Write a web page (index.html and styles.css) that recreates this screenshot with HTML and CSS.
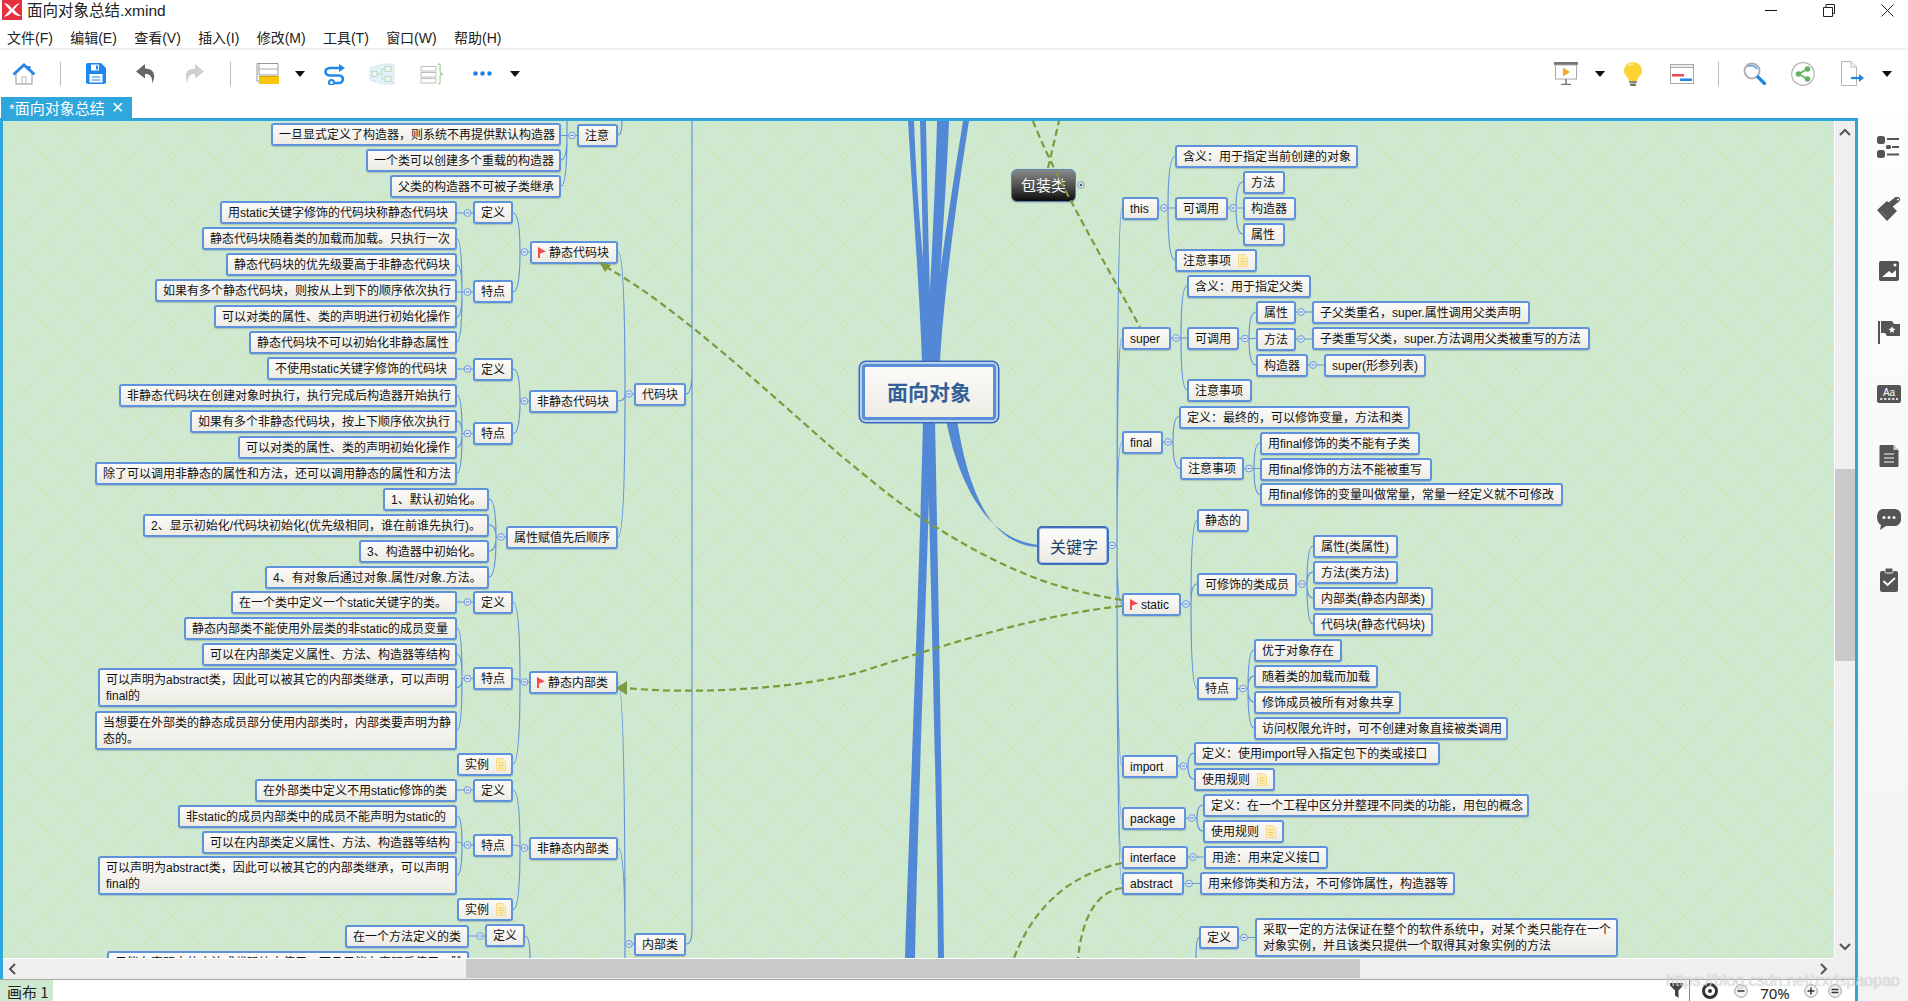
FILE: index.html
```html
<!DOCTYPE html>
<html lang="zh-CN">
<head>
<meta charset="utf-8">
<title>面向对象总结.xmind</title>
<link rel="stylesheet" href="styles.css">
</head>
<body>
<svg class="defs" aria-hidden="true">
  <symbol id="note" viewBox="0 0 10 13"><path d="M.5.5H6.5L9.5 3.5V12.5H.5Z" fill="#fdeeb8" stroke="#f6d98a"/><path d="M2.5 5H7.5M2.5 7.5H7.5M2.5 10H7.5" stroke="#f4c95c"/></symbol>
  <symbol id="flag" viewBox="0 0 8 11"><path d="M0 0L8 4.5 2 6.5V11H0Z" fill="#ee4a50"/></symbol>
  <symbol id="tri" viewBox="0 0 10 6"><path d="M0 0H10L5 6Z" fill="#111"/></symbol>
</svg>

<header class="titlebar">
  <svg class="app-logo" viewBox="0 0 20 20"><rect width="20" height="20" fill="#e5303f"/><path d="M2 3C7 4 9 7 10 9 12 6 14 4 18 3 15 6 13 8 12 10 14 12 16 14 19 16 14 16 12 14 10 12 8 14 6 16 2 17 4 14 6 12 8 10 6 8 4 6 2 3Z" fill="#fff"/></svg>
  <span class="doc-title">面向对象总结.xmind</span>
  <div class="win-controls">
    <span class="win-btn"><svg width="12" height="12" viewBox="0 0 12 12"><path d="M0 6.5H12" stroke="#111"/></svg></span>
    <span class="win-btn"><svg width="12" height="13" viewBox="0 0 12 13"><path d="M.5 3.5H9.5V12.5H.5ZM3 3.5V.5H11.5V9.5H9.5" fill="none" stroke="#222"/></svg></span>
    <span class="win-btn win-close"><svg width="13" height="13" viewBox="0 0 13 13"><path d="M.5.5L12.5 12.5M12.5.5L.5 12.5" stroke="#222"/></svg></span>
  </div>
</header>

<nav class="menubar">
  <span>文件(F)</span><span>编辑(E)</span><span>查看(V)</span><span>插入(I)</span><span>修改(M)</span><span>工具(T)</span><span>窗口(W)</span><span>帮助(H)</span>
</nav>

<div class="toolbar">
  <span class="tb w40"><svg width="24" height="22" viewBox="0 0 24 22"><path d="M4 11V21H20V11" fill="#fff" stroke="#b5b5b5" stroke-width="1.4"/><path d="M10 21V14H14V21" fill="none" stroke="#b5b5b5"/><path d="M1.5 11.5L12 2 22.5 11.5" fill="none" stroke="#2b86e6" stroke-width="3"/><path d="M17 3V7" stroke="#2b86e6" stroke-width="3"/></svg></span>
  <span class="tb w32"><i class="sep"></i></span>
  <span class="tb w40"><svg width="20" height="21" viewBox="0 0 20 21"><path d="M2 0H15L20 5V19a2 2 0 0 1-2 2H2a2 2 0 0 1-2-2V2A2 2 0 0 1 2 0Z" fill="#1e88f0"/><rect x="5" y="1.5" width="8" height="6" fill="#fff"/><rect x="10" y="2.5" width="2" height="4" fill="#1e88f0"/><rect x="3.5" y="11" width="13" height="8.5" fill="#fff"/><path d="M5.5 14H14.5M5.5 17H14.5" stroke="#1e88f0"/></svg></span>
  <span class="tb w58"><svg width="19" height="21" viewBox="0 0 19 21"><path d="M9 1L0 8.5 9 15.5V11C13 10.500 17 13 16 20.500 20 14 19 5.500 9 5.500Z" fill="#666"/></svg></span>
  <span class="tb w40"><svg width="19" height="21" viewBox="0 0 19 21"><path d="M10 1L19 8.500 10 15.500V11C6 10.500 2 13 3 20.500-1 14 0 5.500 10 5.500Z" fill="#cfcfcf"/></svg></span>
  <span class="tb w32"><i class="sep"></i></span>
  <span class="tb w42"><svg width="23" height="21" viewBox="0 0 23 21"><path d="M3 .5H22V12H3ZM3 .5H1V18H3" fill="#fff" stroke="#999"/><path d="M3 6H22" stroke="#aaa"/><rect x="3" y="13" width="20" height="8" fill="#fbc50d"/><rect x="3" y="13" width="20" height="1" fill="#d9a400"/></svg></span>
  <span class="tb w24"><svg class="tri" viewBox="0 0 10 6"><use href="#tri"/></svg></span>
  <span class="tb w44"><svg width="24" height="22" viewBox="0 0 24 22"><path d="M21 5H8C2 5 2 12.500 8 12.500H17C22.500 12.500 22 20 16.500 20H13" fill="none" stroke="#1e88e5" stroke-width="2.6"/><circle cx="9.500" cy="19.500" r="2.500" fill="none" stroke="#1e88e5" stroke-width="2"/><path d="M17 1V9L23 5Z" fill="#1e88e5"/></svg></span>
  <span class="tb w52"><svg width="26" height="22" viewBox="0 0 26 22"><path d="M1 5L13 1 25 1V21H13L1 17Z" fill="#e3f2f8" stroke="#bfe0ec" stroke-dasharray="2 1.500"/><path d="M8 11H13M13 6V16M13 6H16M13 16H16" stroke="#bcd9c2" fill="none"/><rect x="3" y="8.500" width="5" height="5" fill="#eff8f2" stroke="#bcd9c2"/><rect x="16" y="3.500" width="6" height="5" fill="#eff8f2" stroke="#bcd9c2"/><rect x="16" y="13.500" width="6" height="5" fill="#eff8f2" stroke="#bcd9c2"/></svg></span>
  <span class="tb w48"><svg width="24" height="22" viewBox="0 0 24 22"><path d="M1 3.500H16V8H1ZM1 9.500H16V14H1ZM1 15.500H16V20H1Z" fill="#fff" stroke="#bdbdbd"/><path d="M18 1C21 1 20 3 20 8 20 10 21 11 23 11 21 11 20 12 20 14 20 19 21 21 18 21" fill="none" stroke="#a7d49b" stroke-width="1.300"/></svg></span>
  <span class="tb w52"><svg width="19" height="5" viewBox="0 0 19 5"><g fill="#1f7fe0"><circle cx="2.500" cy="2.500" r="2.200"/><circle cx="9.500" cy="2.500" r="2.200"/><circle cx="16.500" cy="2.500" r="2.200"/></g></svg></span>
  <span class="tb w14"><svg class="tri" viewBox="0 0 10 6"><use href="#tri"/></svg></span>

  <span class="tb w52 tb-push"><svg width="24" height="23" viewBox="0 0 24 23"><rect x="0" y="0" width="24" height="3" fill="#777"/><rect x="1.500" y="3" width="21" height="14" fill="#fff" stroke="#aaa"/><path d="M9 5.500L16 10 9 14.500Z" fill="#f5a623"/><path d="M12 17V22M7 22.500H17" stroke="#777" stroke-width="1.500"/></svg></span>
  <span class="tb w16"><svg class="tri" viewBox="0 0 10 6"><use href="#tri"/></svg></span>
  <span class="tb w50"><svg width="18" height="24" viewBox="0 0 18 24"><path d="M9 0C14 0 18 4 18 9 18 13 14 15 13 19H5C4 15 0 13 0 9 0 4 4 0 9 0Z" fill="#fdd335"/><path d="M4 4C5.500 2.500 7 2 9 2" stroke="#fff3b0" stroke-width="1.500" fill="none"/><rect x="5" y="19" width="8" height="2" fill="#8c8c7a"/><rect x="6" y="21.500" width="6" height="2.500" rx="1" fill="#6e6e62"/></svg></span>
  <span class="tb w48"><svg width="24" height="20" viewBox="0 0 24 20"><rect x=".5" y=".5" width="23" height="19" fill="#fff" stroke="#aaa"/><rect x=".5" y=".5" width="23" height="3" fill="#eee" stroke="#aaa"/><rect x="2" y="10" width="12" height="2.500" fill="#ee4a50"/><rect x="10" y="14.500" width="12" height="2.500" fill="#1e88e5"/></svg></span>
  <span class="tb w25"><i class="sep"></i></span>
  <span class="tb w46"><svg width="23" height="23" viewBox="0 0 23 23"><circle cx="9" cy="9" r="7.500" fill="#fff" stroke="#aab0b5" stroke-width="2"/><path d="M5 4.500C8 3 11 3 14 7" fill="none" stroke="#4a90d9" stroke-width="1.300"/><path d="M15 15L21.500 21.500" stroke="#1e88e5" stroke-width="3.200" stroke-linecap="round"/></svg></span>
  <span class="tb w52"><svg width="24" height="24" viewBox="0 0 24 24"><circle cx="12" cy="12" r="11.300" fill="#fff" stroke="#b5b5b5" stroke-width="1.200"/><path d="M16.500 7L7.500 12 16.500 17" fill="none" stroke="#62b55a" stroke-width="1.600"/><g fill="#62b55a"><circle cx="16.500" cy="7" r="2.800"/><circle cx="7.500" cy="12" r="2.800"/><circle cx="16.500" cy="17" r="2.800"/></g></svg></span>
  <span class="tb w46"><svg width="23" height="25" viewBox="0 0 23 25"><path d="M.5.500H10L15.500 6V24.500H.5ZM10 .5V6H15.500" fill="#fff" stroke="#b5b5b5"/><path d="M10 17H20" stroke="#1e88e5" stroke-width="2.200"/><path d="M18 13L23 17 18 21Z" fill="#1e88e5"/></svg></span>
  <span class="tb w24 tb-last"><svg class="tri" viewBox="0 0 10 6"><use href="#tri"/></svg></span>
</div>

<div class="tabs"><span class="tab">*面向对象总结<b class="tab-x">×</b></span></div>

<main class="workspace">
  <div class="center">
    <section class="editor">
      <div class="canvas">
        <div class="stage">
          <svg class="layer" viewBox="0 0 1908 1001" aria-hidden="true">
            <defs>
              <pattern id="lattice" patternUnits="userSpaceOnUse" x="1642" y="117" width="42" height="42">
                <path d="M0 0L42 42M42 0L0 42" stroke="#d9dd8c" stroke-width="1.100" stroke-dasharray="1.400 2.800" fill="none"/>
              </pattern>
              <g id="c"><circle r="3.400" fill="#dbe8f6" stroke="#6c9bdc" stroke-width="1"/><path d="M-1.600 0H1.600" stroke="#5a7fb5"/></g>
            </defs>
            <rect width="1908" height="1001" fill="url(#lattice)"/>
            <g class="trunk">
              <path d="M908 121H914C918 230 928 300 932 362H922C920 300 914 220 908 121Z"/>
              <path d="M920 121H926C928 230 930 300 932 362H924C924 280 922 200 920 121Z"/>
              <path d="M937 121H949C946 200 938 290 936 362H926C930 290 935 200 937 121Z"/>
              <path d="M963 121H969C958 190 944 290 940 362H930C936 290 952 190 963 121Z"/>
              <path d="M923 420H931C928 560 918 800 915 958H905C910 800 920 560 923 420Z"/>
              <path d="M927 420H935C938 560 942 800 944 958H938C937 800 930 560 927 420Z"/>
              <path d="M946 420H957C968 490 990 545 1038 547V545C990 540 960 490 946 420Z"/>
            </g>
            <path class="thin" d="M577 135.500H561M567 135V121M567 135Q567 160 561 160M567 135Q567 186 561 186M622 121Q622 135 618 135
              M530 252H520M520 252Q520 213 513 213M520 252Q520 292 513 292M473 213H457
              M473 292H457M462 292Q462 239 457 239M462 292Q462 265 457 265M462 292Q462 317 457 317M462 292Q462 342 457 342
              M529 401H520M520 401Q520 369 513 369M520 401Q520 433.500 513 433.500M473 369H457
              M473 433.500H462M462 433.500Q462 395 457 395M462 433.500Q462 421 457 421M462 433.500Q462 447 457 447M462 433.500Q462 473 457 473
              M506 537H496M496 537Q496 499 489 499M496 537Q496 525 489 525M496 537Q496 551 489 551M496 537Q496 577 489 577
              M634 394H625M625 394Q625 252 618 252M625 394Q625 401 618 401M625 394Q625 537 618 537
              M692 121V930Q692 944 686 944M692 370Q692 394 686 394
              M529 682H520M520 682Q520 602 513 602M520 682Q520 678.500 513 678.500M520 682Q520 764 513 764M473 602H457
              M473 678.500H462M462 678.500Q462 628 457 628M462 678.500Q462 654 457 654M462 678.500Q462 687.500 457 687.500M462 678.500Q462 730 457 730
              M529 848H520M520 848Q520 790 513 790M520 848Q520 845 513 845M520 848Q520 909.500 513 909.500M473 790H457
              M473 845H462M462 845Q462 816 457 816M462 845Q462 842 457 842M462 845Q462 875 457 875
              M634 944H625M625 944Q625 682 618 682M625 944Q625 848 618 848M625 944V958M485 936H469M525 936Q530 936 530 958
              M1159 208H1175M1168 208Q1168 156.500 1175 156.500M1168 208Q1168 260 1175 260
              M1228 208H1243M1236 208Q1236 182 1243 182M1236 208Q1236 234 1243 234
              M1171 338H1187M1181 338Q1181 286 1187 286M1181 338Q1181 390 1187 390
              M1239 338.500H1256M1249 338Q1249 312 1256 312M1249 338Q1249 365 1256 365
              M1296 312H1312M1296 339H1312M1308 365H1324
              M1163 442H1173M1173 442Q1173 416.500 1179 416.500M1173 442Q1173 468.500 1180 468.500
              M1243 468.500H1260M1254 468.500Q1254 443 1260 443M1254 468.500Q1254 494.500 1260 494.500
              M1109 545.500H1117M1117 545.500Q1117 208 1122 208M1117 545.500Q1117 338 1122 338M1117 545.500Q1117 442 1122 442M1117 545.500Q1117 604 1122 604M1117 545.500Q1117 766 1122 766M1117 545.500Q1117 818 1122 818M1117 545.500Q1117 857 1122 857M1117 545.500Q1117 883.500 1122 883.500
              M1181 604H1191M1191 604Q1191 520.500 1197 520.500M1191 604Q1191 584 1197 584M1191 604Q1191 688.500 1197 688.500
              M1297 584H1307M1307 584Q1307 546 1313 546M1307 584Q1307 572 1313 572M1307 584Q1307 598 1313 598M1307 584Q1307 624 1313 624
              M1238 688.500H1248M1248 688.500Q1248 650 1254 650M1248 688.500Q1248 676 1254 676M1248 688.500Q1248 702 1254 702M1248 688.500Q1248 728 1254 728
              M1178 766H1188M1188 766Q1188 753 1194 753M1188 766Q1188 779 1194 779
              M1186 818H1197M1197 818Q1197 805 1203 805M1197 818Q1197 831 1203 831
              M1188 857H1204M1184 883.500H1200M1239 937.500H1255M1199 937.500Q1196 937.500 1196 958"/>
            <use href="#c" x="572" y="135.500"/><use href="#c" x="524.500" y="252"/><use href="#c" x="467.500" y="213"/><use href="#c" x="467.500" y="292"/>
            <use href="#c" x="524.500" y="401"/><use href="#c" x="467.500" y="369"/><use href="#c" x="467.500" y="433.500"/><use href="#c" x="501" y="537"/>
            <use href="#c" x="629" y="394"/><use href="#c" x="524.500" y="682"/><use href="#c" x="467.500" y="602"/><use href="#c" x="467.500" y="678.500"/>
            <use href="#c" x="524.500" y="848"/><use href="#c" x="467.500" y="790"/><use href="#c" x="467.500" y="845"/><use href="#c" x="629" y="944"/><use href="#c" x="480" y="936"/>
            <use href="#c" x="1164" y="208"/><use href="#c" x="1233" y="208"/><use href="#c" x="1176" y="338"/><use href="#c" x="1245" y="338.500"/>
            <use href="#c" x="1301" y="312"/><use href="#c" x="1301" y="339"/><use href="#c" x="1313" y="365"/><use href="#c" x="1168" y="442"/><use href="#c" x="1249" y="468.500"/>
            <use href="#c" x="1112" y="545.500"/><use href="#c" x="1186" y="604"/><use href="#c" x="1302" y="584"/><use href="#c" x="1243" y="688.500"/>
            <use href="#c" x="1183.500" y="766"/><use href="#c" x="1192" y="818"/><use href="#c" x="1193" y="857"/><use href="#c" x="1189" y="883.500"/><use href="#c" x="1244" y="937.500"/>
          </svg>

          <div class="n root" style="left:862px;top:364px;width:134px">面向对象</div>
          <div class="n key" style="left:1037px;top:526px;width:72px">关键字</div>
          <div class="n dark" style="left:1011px;top:169px;width:65px">包装类</div>
          <svg class="dark-dot" viewBox="0 0 8 8"><circle cx="4" cy="4" r="3.300" fill="#dfe6ee" stroke="#8a9bb0"/><circle cx="4" cy="4" r="1.300" fill="#4c5a6e"/></svg>

          <div class="n" style="left:271px;top:123px;width:290px">一旦显式定义了构造器，则系统不再提供默认构造器</div>
          <div class="n" style="left:366px;top:149px;width:195px">一个类可以创建多个重载的构造器</div>
          <div class="n" style="left:390px;top:175px;width:171px">父类的构造器不可被子类继承</div>
          <div class="n" style="left:577px;top:124px;width:41px">注意</div>
          <div class="n" style="left:473px;top:201px;width:40px">定义</div>
          <div class="n" style="left:220px;top:201px;width:237px">用static关键字修饰的代码块称静态代码块</div>
          <div class="n" style="left:202px;top:227px;width:255px">静态代码块随着类的加载而加载。只执行一次</div>
          <div class="n" style="left:226px;top:253px;width:231px">静态代码块的优先级要高于非静态代码块</div>
          <div class="n" style="left:530px;top:241px;width:88px"><svg class="flag"><use href="#flag"/></svg>静态代码块</div>
          <div class="n" style="left:155px;top:279px;width:302px">如果有多个静态代码块，则按从上到下的顺序依次执行</div>
          <div class="n" style="left:473px;top:280px;width:40px">特点</div>
          <div class="n" style="left:214px;top:305px;width:243px">可以对类的属性、类的声明进行初始化操作</div>
          <div class="n" style="left:249px;top:331px;width:208px">静态代码块不可以初始化非静态属性</div>
          <div class="n" style="left:267px;top:357px;width:190px">不使用static关键字修饰的代码块</div>
          <div class="n" style="left:473px;top:358px;width:40px">定义</div>
          <div class="n" style="left:529px;top:390px;width:89px">非静态代码块</div>
          <div class="n" style="left:634px;top:383px;width:52px">代码块</div>
          <div class="n" style="left:119px;top:384px;width:338px">非静态代码块在创建对象时执行，执行完成后构造器开始执行</div>
          <div class="n" style="left:190px;top:410px;width:267px">如果有多个非静态代码块，按上下顺序依次执行</div>
          <div class="n" style="left:473px;top:422px;width:40px">特点</div>
          <div class="n" style="left:238px;top:436px;width:219px">可以对类的属性、类的声明初始化操作</div>
          <div class="n" style="left:95px;top:462px;width:362px">除了可以调用非静态的属性和方法，还可以调用静态的属性和方法</div>
          <div class="n" style="left:383px;top:488px;width:106px">1、默认初始化。</div>
          <div class="n" style="left:143px;top:514px;width:346px">2、显示初始化/代码块初始化(优先级相同，谁在前谁先执行)。</div>
          <div class="n" style="left:506px;top:526px;width:112px">属性赋值先后顺序</div>
          <div class="n" style="left:359px;top:540px;width:130px">3、构造器中初始化。</div>
          <div class="n" style="left:265px;top:566px;width:224px">4、有对象后通过对象.属性/对象.方法。</div>
          <div class="n" style="left:231px;top:591px;width:226px">在一个类中定义一个static关键字的类。</div>
          <div class="n" style="left:473px;top:591px;width:40px">定义</div>
          <div class="n" style="left:184px;top:617px;width:273px">静态内部类不能使用外层类的非static的成员变量</div>
          <div class="n" style="left:202px;top:643px;width:255px">可以在内部类定义属性、方法、构造器等结构</div>
          <div class="n two" style="left:98px;top:668px;width:359px">可以声明为abstract类，因此可以被其它的内部类继承，可以声明<br>final的</div>
          <div class="n" style="left:473px;top:667px;width:40px">特点</div>
          <div class="n" style="left:529px;top:671px;width:89px"><svg class="flag"><use href="#flag"/></svg>静态内部类</div>
          <div class="n two" style="left:95px;top:711px;width:362px">当想要在外部类的静态成员部分使用内部类时，内部类要声明为静<br>态的。</div>
          <div class="n" style="left:457px;top:753px;width:56px">实例<svg class="note"><use href="#note"/></svg></div>
          <div class="n" style="left:255px;top:779px;width:202px">在外部类中定义不用static修饰的类</div>
          <div class="n" style="left:473px;top:779px;width:40px">定义</div>
          <div class="n" style="left:178px;top:805px;width:279px">非static的成员内部类中的成员不能声明为static的</div>
          <div class="n" style="left:202px;top:831px;width:255px">可以在内部类定义属性、方法、构造器等结构</div>
          <div class="n" style="left:473px;top:834px;width:40px">特点</div>
          <div class="n" style="left:529px;top:837px;width:89px">非静态内部类</div>
          <div class="n two" style="left:98px;top:856px;width:359px">可以声明为abstract类，因此可以被其它的内部类继承，可以声明<br>final的</div>
          <div class="n" style="left:457px;top:898px;width:56px">实例<svg class="note"><use href="#note"/></svg></div>
          <div class="n" style="left:345px;top:925px;width:124px">在一个方法定义的类</div>
          <div class="n" style="left:485px;top:924px;width:40px">定义</div>
          <div class="n" style="left:634px;top:933px;width:52px">内部类</div>
          <div class="n two" style="left:107px;top:951px;width:362px">只能在声明它的方法或代码块中使用，而且只能在声明后使用，除<br>此之外的任何地方都不能使用</div>

          <div class="n" style="left:1122px;top:197px;width:37px">this</div>
          <div class="n" style="left:1175px;top:145px;width:183px">含义：用于指定当前创建的对象</div>
          <div class="n" style="left:1175px;top:197px;width:53px">可调用</div>
          <div class="n" style="left:1243px;top:171px;width:42px">方法</div>
          <div class="n" style="left:1243px;top:197px;width:53px">构造器</div>
          <div class="n" style="left:1243px;top:223px;width:42px">属性</div>
          <div class="n" style="left:1175px;top:249px;width:82px">注意事项<svg class="note"><use href="#note"/></svg></div>
          <div class="n" style="left:1122px;top:327px;width:49px">super</div>
          <div class="n" style="left:1187px;top:275px;width:124px">含义：用于指定父类</div>
          <div class="n" style="left:1187px;top:327px;width:52px">可调用</div>
          <div class="n" style="left:1256px;top:301px;width:40px">属性</div>
          <div class="n" style="left:1256px;top:328px;width:40px">方法</div>
          <div class="n" style="left:1256px;top:354px;width:52px">构造器</div>
          <div class="n" style="left:1187px;top:379px;width:65px">注意事项</div>
          <div class="n" style="left:1312px;top:301px;width:218px">子父类重名，super.属性调用父类声明</div>
          <div class="n" style="left:1312px;top:327px;width:278px">子类重写父类，super.方法调用父类被重写的方法</div>
          <div class="n" style="left:1324px;top:354px;width:102px">super(形参列表)</div>
          <div class="n" style="left:1122px;top:431px;width:41px">final</div>
          <div class="n" style="left:1179px;top:406px;width:231px">定义：最终的，可以修饰变量，方法和类</div>
          <div class="n" style="left:1180px;top:457px;width:64px">注意事项</div>
          <div class="n" style="left:1260px;top:432px;width:160px">用final修饰的类不能有子类</div>
          <div class="n" style="left:1260px;top:458px;width:172px">用final修饰的方法不能被重写</div>
          <div class="n" style="left:1260px;top:483px;width:303px">用final修饰的变量叫做常量，常量一经定义就不可修改</div>
          <div class="n" style="left:1122px;top:593px;width:59px"><svg class="flag"><use href="#flag"/></svg>static</div>
          <div class="n" style="left:1197px;top:509px;width:52px">静态的</div>
          <div class="n" style="left:1197px;top:573px;width:100px">可修饰的类成员</div>
          <div class="n" style="left:1313px;top:535px;width:85px">属性(类属性)</div>
          <div class="n" style="left:1313px;top:561px;width:85px">方法(类方法)</div>
          <div class="n" style="left:1313px;top:587px;width:120px">内部类(静态内部类)</div>
          <div class="n" style="left:1313px;top:613px;width:120px">代码块(静态代码块)</div>
          <div class="n" style="left:1197px;top:677px;width:41px">特点</div>
          <div class="n" style="left:1254px;top:639px;width:88px">优于对象存在</div>
          <div class="n" style="left:1254px;top:665px;width:124px">随着类的加载而加载</div>
          <div class="n" style="left:1254px;top:691px;width:147px">修饰成员被所有对象共享</div>
          <div class="n" style="left:1254px;top:717px;width:254px">访问权限允许时，可不创建对象直接被类调用</div>
          <div class="n" style="left:1122px;top:755px;width:56px">import</div>
          <div class="n" style="left:1194px;top:742px;width:246px">定义：使用import导入指定包下的类或接口</div>
          <div class="n" style="left:1194px;top:768px;width:81px">使用规则<svg class="note"><use href="#note"/></svg></div>
          <div class="n" style="left:1122px;top:807px;width:64px">package</div>
          <div class="n" style="left:1203px;top:794px;width:326px">定义：在一个工程中区分并整理不同类的功能，用包的概念</div>
          <div class="n" style="left:1203px;top:820px;width:81px">使用规则<svg class="note"><use href="#note"/></svg></div>
          <div class="n" style="left:1122px;top:846px;width:66px">interface</div>
          <div class="n" style="left:1204px;top:846px;width:124px">用途：用来定义接口</div>
          <div class="n" style="left:1122px;top:872px;width:62px">abstract</div>
          <div class="n" style="left:1200px;top:872px;width:255px">用来修饰类和方法，不可修饰属性，构造器等</div>
          <div class="n" style="left:1199px;top:926px;width:40px">定义</div>
          <div class="n two" style="left:1255px;top:918px;width:363px">采取一定的方法保证在整个的软件系统中，对某个类只能存在一个<br>对象实例，并且该类只提供一个取得其对象实例的方法</div>

          <svg class="layer overlay" viewBox="0 0 1908 1001" aria-hidden="true">
            <path class="rel" d="M1122 600C1085 594 1060 587 1038 579 995 563 955 540 920 517 890 497 865 475 840 455 760 385 680 310 608 268"/>
            <path class="rel" d="M1122 606C1040 615 960 640 860 672 800 688 700 695 625 688"/>
            <path class="rel" d="M1033 121C1050 165 1085 228 1140 327"/>
            <path class="rel" d="M1048 168L1059 121"/>
            <path class="rel" d="M1122 863C1090 870 1040 890 1014 958"/>
            <path class="rel" d="M1122 888C1095 892 1082 920 1078 958"/>
            <path class="rel-head" d="M599 262L611 265 605 272Z"/>
            <path class="rel-head" d="M616 688L627 681V695Z"/>
          </svg>
        </div>
      </div>
      <div class="vbar">
        <svg class="chev chev-up" viewBox="0 0 12 8"><path d="M1 7L6 2 11 7"/></svg>
        <div class="vthumb"></div>
        <svg class="chev chev-down" viewBox="0 0 12 8"><path d="M1 1L6 6 11 1"/></svg>
      </div>
      <div class="hbar">
        <svg class="chev chev-left" viewBox="0 0 8 12"><path d="M7 1L2 6 7 11"/></svg>
        <div class="hthumb"></div>
        <svg class="chev chev-right" viewBox="0 0 8 12"><path d="M1 1L6 6 1 11"/></svg>
      </div>
      <div class="corner"></div>
    </section>
    <footer class="status">
      <span class="sheet">画布 1</span>
      <div class="status-tools">
        <span class="st w26"><svg width="13" height="15" viewBox="0 0 13 15"><path d="M0 0H13V2.500L8.500 7.500V15L5 12.500V7.500L0 2.500Z" fill="#444"/></svg></span>
        <span class="st w40 st-eye"><svg width="16" height="16" viewBox="0 0 16 16"><circle cx="8" cy="8" r="6.500" fill="none" stroke="#333" stroke-width="3"/><circle cx="8" cy="8" r="2" fill="#333"/></svg></span>
        <span class="st w24"><svg width="14" height="14" viewBox="0 0 14 14"><circle cx="7" cy="7" r="6.300" fill="#f3f3f3" stroke="#9a9a9a"/><path d="M3.500 7H10.500" stroke="#333" stroke-width="1.500"/></svg></span>
        <span class="st w44 zoom-val">70%</span>
        <span class="st w28"><svg width="14" height="14" viewBox="0 0 14 14"><circle cx="7" cy="7" r="6.300" fill="#f3f3f3" stroke="#9a9a9a"/><path d="M3.500 7H10.500M7 3.500V10.500" stroke="#333" stroke-width="1.500"/></svg></span>
        <span class="st w20"><svg width="14" height="14" viewBox="0 0 14 14"><circle cx="7" cy="7" r="6.300" fill="#f3f3f3" stroke="#9a9a9a"/><path d="M3.500 5.500H10.500M3.500 8.500H10.500" stroke="#333" stroke-width="1.500"/></svg></span>
      </div>
      <span class="watermark">https://blog.csdn.net/zxdspaopao</span>
    </footer>
  </div>

  <aside class="sidebar">
    <svg class="side-ico" viewBox="0 0 24 24"><rect y="1" width="8" height="8" rx="2.500"/><rect x="9" y="10" width="5" height="4" rx="1.500"/><rect y="15" width="8" height="8" rx="2.500"/><path d="M10 4H22M15 12H22M10 19.500H22" stroke="#555" stroke-width="2" fill="none"/></svg>
    <svg class="side-ico" viewBox="0 0 24 24"><path d="M0 13L10 4 20 14 10 24Z"/><path d="M13 8L20 2.500" stroke="#555" stroke-width="6" stroke-linecap="round"/><circle cx="21" cy="2.500" r="1" fill="#fff"/><path d="M4 14L10 20" stroke="#777" fill="none"/></svg>
    <svg class="side-ico" viewBox="0 0 24 24"><rect x="2" y="2" width="20" height="20" rx="2"/><path d="M5 18L12 12 15 14.500 19 11V18Z" fill="#fff"/><circle cx="18" cy="6" r="1.500" fill="#fff"/></svg>
    <svg class="side-ico" viewBox="0 0 24 24"><rect x="1" y="0" width="2" height="23"/><path d="M4 0H15L17 3H23V15H10L8 12H4Z"/><path d="M15 5L16 7.500 18.500 8 16.500 9.500 17 12 15 10.500 13 12 13.500 9.500 11.500 8 14 7.500Z" fill="#fff"/></svg>
    <svg class="side-ico" viewBox="0 0 24 24"><rect y="3" width="24" height="18" rx="2"/><text class="aa" x="12" y="14">Aa</text><path d="M3 17H21" stroke="#fff" stroke-width="1.500" stroke-dasharray="2.500 1.500"/></svg>
    <svg class="side-ico" viewBox="0 0 24 24"><path d="M4 2a1.500 1.500 0 0 0-1.500 1.500V22.500A1.500 1.500 0 0 0 4 24H20a1.500 1.500 0 0 0 1.500-1.500V7L16.500 2Z" transform="translate(0 -1)"/><path d="M16.500 1V6H21.500Z" fill="#ccc"/><path d="M7 10H17M7 14H17M7 18H17" stroke="#fff" stroke-width="1.200"/></svg>
    <svg class="side-ico" viewBox="0 0 24 24"><path d="M6 3H18C27 3 26 20 18 20H9L3 24 4 19C-2 16-1 3 6 3Z"/><g fill="#fff"><circle cx="7" cy="11.500" r="1.500"/><circle cx="12" cy="11.500" r="1.500"/><circle cx="17" cy="11.500" r="1.500"/></g></svg>
    <svg class="side-ico" viewBox="0 0 24 24"><rect x="3" y="3" width="18" height="21" rx="2"/><rect x="8" y="0" width="8" height="5" rx="1.500" fill="#555" stroke="#f7f7f7"/><path d="M6.500 13L10.500 17 18 10" fill="none" stroke="#fff" stroke-width="1.800"/></svg>
  </aside>
</main>
</body>
</html>
```

FILE: styles.css
```css
* { box-sizing: border-box; }
html, body { margin: 0; height: 100%; }
body {
  width: 1908px;
  height: 1001px;
  overflow: hidden;
  display: flex;
  flex-direction: column;
  background: #fff;
  color: #111;
  font-family: "Liberation Sans", "Noto Sans CJK SC", sans-serif;
  font-size: 12px;
}
.defs { position: absolute; width: 0; height: 0; }

.titlebar { height: 26px; display: flex; align-items: flex-start; flex: none; }
.app-logo { width: 20px; height: 20px; margin-left: 2px; }
.doc-title { margin-left: 5px; font-size: 15.500px; line-height: 22px; color: #222; }
.win-controls { margin-left: auto; display: flex; }
.win-btn { width: 58px; height: 20px; display: flex; align-items: center; justify-content: center; }
.win-close { width: 50px; justify-content: flex-end; padding-right: 14px; }

.menubar {
  height: 24px; flex: none; display: flex; gap: 17.300px; padding-left: 7px;
  align-items: center; font-size: 14px; color: #222;
  border-bottom: 2px solid #f0f0f0;
}

.toolbar { height: 47px; flex: none; display: flex; align-items: center; padding-left: 4px; }
.tb { display: flex; align-items: center; justify-content: center; height: 47px; }
.tb-push { margin-left: auto; }
.tb-last { margin-right: 9px; }
.sep { display: block; width: 1px; height: 24px; background: #bbb; }
.tri { width: 10px; height: 6px; }
.w14 { width: 14px; } .w16 { width: 16px; } .w20 { width: 20px; } .w24 { width: 24px; } .w25 { width: 25px; }
.w26 { width: 26px; } .w28 { width: 28px; } .w32 { width: 32px; } .w40 { width: 40px; } .w42 { width: 42px; }
.w44 { width: 44px; } .w46 { width: 46px; } .w48 { width: 48px; } .w50 { width: 50px; } .w52 { width: 52px; }
.w58 { width: 58px; }

.tabs { height: 21px; flex: none; padding-left: 1px; display: flex; }
.tab {
  width: 131px; height: 21px; background: #2fa6dc; color: #fff;
  font-size: 15px; line-height: 23px; padding-left: 8px; display: flex;
}
.tab-x { font-weight: 400; font-size: 20px; margin-left: 7px; line-height: 21px; }

.workspace { flex: 1; display: flex; min-height: 0; }
.center { width: 1858px; display: flex; flex-direction: column; border-right: 3px solid #2fa6dc; }
.editor {
  flex: 1; display: grid; min-height: 0;
  grid-template-columns: 1fr 21px; grid-template-rows: 1fr 21px;
  border-top: 3px solid #2fa6dc; border-left: 3px solid #2fa6dc;
}
.canvas { position: relative; overflow: hidden; background: #cfe8d0; }
.stage { position: absolute; left: -3px; top: -121px; width: 1908px; height: 1001px; }
.layer { position: absolute; left: 0; top: 0; width: 1908px; height: 1001px; }
.overlay { pointer-events: none; }
.trunk path { fill: #5388d6; }
.thin { fill: none; stroke: #6595da; stroke-width: 1.200; }
.rel { fill: none; stroke: #7d9a3c; stroke-width: 2.200; stroke-dasharray: 7 4; }
.rel-head { fill: #7d9a3c; }

.n {
  position: absolute; height: 23px; display: flex; align-items: center;
  padding: 0 0 0 6px; white-space: nowrap; line-height: 16px;
  border: 2px solid #5f92dc; border-radius: 3px;
  background: linear-gradient(#fcfbf9, #ecebe3);
  box-shadow: 0 1px 1px rgba(60, 80, 110, .25);
  color: #111; font-size: 12px;
}
.two { height: 39px; }
.flag { width: 8px; height: 11px; margin-right: 3px; flex: none; }
.note { width: 10px; height: 13px; margin-left: 7px; flex: none; }
.root {
  height: 56px; justify-content: center; padding: 0 0 2px;
  font-size: 21px; font-weight: 700; color: #33609a; border: 3px solid #5a8fd8; border-radius: 4px;
  box-shadow: 0 0 0 2px #b8d0ec, 0 0 0 3.500px #3a6cb8;
  font-family: "Noto Sans CJK SC", sans-serif;
}
.key {
  height: 39px; padding: 0 0 0 11px; font-size: 16px; color: #1f3f6b;
  border-color: #3f6fb8; border-radius: 5px; box-shadow: inset 0 0 0 1px #a9c6ea;
  font-family: "Noto Sans CJK SC", sans-serif;
}
.dark {
  height: 33px; justify-content: center; padding: 0; font-size: 15px; color: #fff;
  border: 1px solid #5b83b8; border-radius: 6px;
  background: linear-gradient(#8a8a8a, #4a4a4a 55%, #0c0c0c);
}
.dark-dot { position: absolute; left: 1077px; top: 181px; width: 8px; height: 8px; }

.vbar { position: relative; background: #efefef; border-left: 1px solid #fff; }
.vthumb { position: absolute; left: 0; right: 0; top: 348px; height: 192px; background: #c9c9c9; }
.hbar { position: relative; background: #efefef; border-top: 1px solid #fff; }
.hthumb { position: absolute; left: 463px; width: 894px; top: 0; bottom: 1px; background: #c9c9c9; }
.corner { background: #efefef; }
.chev { position: absolute; fill: none; stroke: #555; stroke-width: 2; }
.chev-up { width: 12px; height: 8px; left: 4px; top: 7px; }
.chev-down { width: 12px; height: 8px; left: 4px; bottom: 7px; }
.chev-left { width: 8px; height: 12px; left: 5px; top: 4px; }
.chev-right { width: 8px; height: 12px; right: 6px; top: 4px; }

.status {
  height: 22px; flex: none; display: flex; position: relative;
  border-top: 1px solid #a8a8a8;
}
.sheet { width: 53px; background: #cfe8d0; font-size: 15px; line-height: 24px; padding-left: 7px; color: #222; white-space: nowrap; overflow: hidden; font-family: "Noto Sans CJK SC", sans-serif; }
.status-tools { margin-left: auto; display: flex; padding-right: 10px; align-items: center; }
.st { display: flex; align-items: center; justify-content: center; height: 21px; }
.st-eye { border-left: 1px solid #888; }
.zoom-val { font-size: 15px; line-height: 13px; height: 13px; align-self: flex-end; margin-bottom: 1px; font-family: "Noto Sans", sans-serif; color: #222; }
.watermark {
  position: absolute; left: 1666px; top: -7px; font-size: 16px; line-height: 15px; white-space: nowrap;
  color: rgba(255, 255, 255, .6); text-shadow: 0 0 1px rgba(110, 110, 110, .55);
}

.sidebar {
  width: 50px; display: flex; flex-direction: column; align-items: center;
  gap: 37.860px; padding: 17px 0 0 12px;
  background: linear-gradient(#fdfdfd, #f3f3f3);
}
.side-ico { width: 24px; height: 24px; fill: #555; flex: none; }
.aa { font-size: 10px; fill: #fff; text-anchor: middle; font-family: "Liberation Sans", sans-serif; }
```
